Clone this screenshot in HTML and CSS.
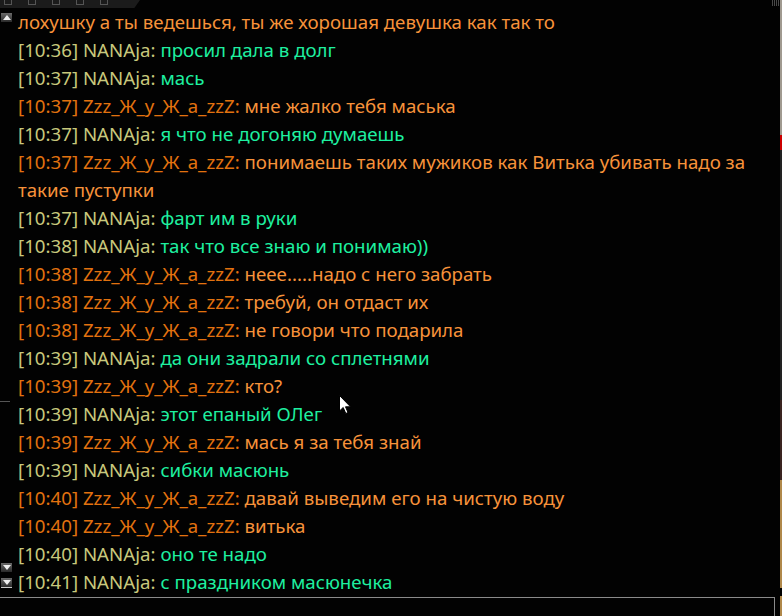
FILE: index.html
```html
<!DOCTYPE html>
<html lang="ru">
<head>
  <meta charset="UTF-8">
  <title>Чат</title>
  <link rel="stylesheet" href="styles.css">
</head>
<body>
  <div class="window">
    <div class="topbar">
      <span class="tb-icon"></span>
      <span class="tb-icon"></span>
      <span class="tb-icon"></span>
      <span class="tb-icon"></span>
      <span class="tb-icon"></span>
    </div>
    <div class="grip"></div>

    <div class="side">
      <span class="arrow up"></span>
      <span class="dash"></span>
      <span class="arrow down"></span>
      <span class="arrow down last"></span>
    </div>

    <div class="chat">
      <div class="msg z"><span class="text">лохушку а ты ведешься, ты же хорошая девушка как так то</span></div>
      <div class="msg n"><span class="who">[10:36] NANAja:</span> <span class="text">просил дала в долг</span></div>
      <div class="msg n"><span class="who">[10:37] NANAja:</span> <span class="text">мась</span></div>
      <div class="msg z"><span class="who">[10:37] Zzz_Ж_у_Ж_а_zzZ:</span> <span class="text">мне жалко тебя маська</span></div>
      <div class="msg n"><span class="who">[10:37] NANAja:</span> <span class="text">я что не догоняю думаешь</span></div>
      <div class="msg z"><span class="who">[10:37] Zzz_Ж_у_Ж_а_zzZ:</span> <span class="text">понимаешь таких мужиков как Витька убивать надо за такие пуступки</span></div>
      <div class="msg n"><span class="who">[10:37] NANAja:</span> <span class="text">фарт им в руки</span></div>
      <div class="msg n"><span class="who">[10:38] NANAja:</span> <span class="text">так что все знаю и понимаю))</span></div>
      <div class="msg z"><span class="who">[10:38] Zzz_Ж_у_Ж_а_zzZ:</span> <span class="text">неее.....надо с него забрать</span></div>
      <div class="msg z"><span class="who">[10:38] Zzz_Ж_у_Ж_а_zzZ:</span> <span class="text">требуй, он отдаст их</span></div>
      <div class="msg z"><span class="who">[10:38] Zzz_Ж_у_Ж_а_zzZ:</span> <span class="text">не говори что подарила</span></div>
      <div class="msg n"><span class="who">[10:39] NANAja:</span> <span class="text">да они задрали со сплетнями</span></div>
      <div class="msg z"><span class="who">[10:39] Zzz_Ж_у_Ж_а_zzZ:</span> <span class="text">кто?</span></div>
      <div class="msg n"><span class="who">[10:39] NANAja:</span> <span class="text">этот епаный ОЛег</span></div>
      <div class="msg z"><span class="who">[10:39] Zzz_Ж_у_Ж_а_zzZ:</span> <span class="text">мась я за тебя знай</span></div>
      <div class="msg n"><span class="who">[10:39] NANAja:</span> <span class="text">сибки масюнь</span></div>
      <div class="msg z"><span class="who">[10:40] Zzz_Ж_у_Ж_а_zzZ:</span> <span class="text">давай выведим его на чистую воду</span></div>
      <div class="msg z"><span class="who">[10:40] Zzz_Ж_у_Ж_а_zzZ:</span> <span class="text">витька</span></div>
      <div class="msg n"><span class="who">[10:40] NANAja:</span> <span class="text">оно те надо</span></div>
      <div class="msg n"><span class="who">[10:41] NANAja:</span> <span class="text">с праздником масюнечка</span></div>
    </div>

    <div class="input-box"></div>
    <div class="right-edge"></div>

    <svg class="cursor" width="13" height="20" viewBox="0 0 13 20">
      <path d="M0.5 0.5 L0.5 16 L4.2 12.5 L6.8 18.5 L9 17.5 L6.5 11.8 L11.5 11.8 Z" fill="#fff" stroke="#000" stroke-width="1"/>
    </svg>
  </div>
</body>
</html>
```

FILE: styles.css
```css
html, body {
  margin: 0;
  padding: 0;
  background: #000;
}
.window {
  position: relative;
  width: 782px;
  height: 616px;
  overflow: hidden;
  background: #020202;
  font-family: "Noto Sans", "Open Sans", sans-serif;
}
.topbar {
  position: absolute;
  top: 0;
  left: 0;
  width: 136px;
  height: 8px;
  background: #1b1b1b;
  display: flex;
  gap: 16px;
  padding-left: 4px;
  clip-path: polygon(0 0, 100% 0, 96% 100%, 0 100%);
}
.tb-icon {
  width: 6px;
  height: 4px;
  border: 1px solid #555;
  border-top: none;
}
.grip {
  position: absolute;
  top: 0;
  right: 2px;
  width: 8px;
  height: 6px;
  background: repeating-linear-gradient(90deg, #777 0 1px, transparent 1px 2px);
  opacity: .6;
}
.side {
  position: absolute;
  left: 0;
  top: 0;
  width: 14px;
  height: 616px;
}
.arrow {
  position: absolute;
  left: 1px;
  width: 11px;
  height: 9px;
  background: linear-gradient(#6a6a6a, #2a2a2a);
}
.arrow::after {
  content: "";
  position: absolute;
  left: 2px;
  border-left: 4px solid transparent;
  border-right: 4px solid transparent;
}
.arrow.up {
  top: 13px;
}
.arrow.up::after {
  top: 2px;
  border-bottom: 5px solid #eee;
}
.arrow.down {
  top: 563px;
}
.arrow.down.last {
  top: 578px;
  border-bottom: 1px solid #ccc;
}
.arrow.down::after {
  top: 2px;
  border-top: 5px solid #eee;
}
.dash {
  position: absolute;
  left: 0;
  top: 401px;
  width: 10px;
  height: 1px;
  background: #555;
}
.chat {
  padding: 8px 0 0 18px;
  width: 745px;
  font-size: 18.7px;
  line-height: 28px;
}
.msg.z .who {
  color: #e2720f;
}
.msg.z .text {
  color: #f7923a;
}
.msg.n .who {
  color: #c8c87c;
}
.msg.n .text {
  color: #1ef0a0;
}
.input-box {
  position: absolute;
  left: 0;
  top: 597px;
  width: 774px;
  height: 30px;
  border-top: 1px solid #8a8a8a;
  border-right: 1px solid #8a8a8a;
}
.right-edge {
  position: absolute;
  right: 0;
  top: 0;
  width: 2px;
  height: 616px;
  background: linear-gradient(#a09a90 0 135px, #c00 135px 150px, #222 150px 400px, #3a2420 400px 480px, #b0884a 480px 588px, #000 588px 596px, #b0884a 596px);
}
.cursor {
  position: absolute;
  left: 339px;
  top: 395px;
}
```
